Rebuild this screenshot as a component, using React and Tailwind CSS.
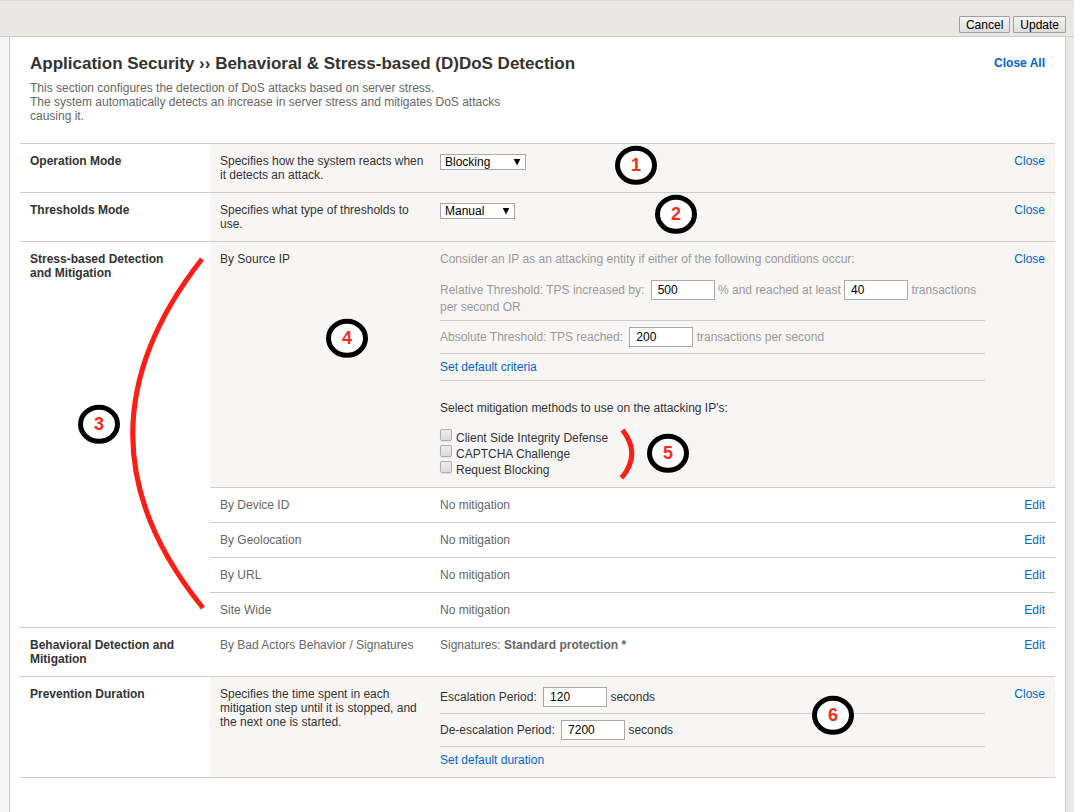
import { useId } from "react";

const linkClass = "text-[#0066cc] hover:underline";
const fieldClass =
  "inline-block h-5 w-16 border border-[#a9a9a9] bg-white px-1.5 align-baseline text-xs leading-[14px] text-black";
const dividedClass = "border-b border-[#cccccc] pb-1.5";

function Badge({ n, className }) {
  return (
    <span
      className={`absolute flex h-10 w-[42px] items-center justify-center text-lg leading-5 font-bold text-[#fb2c1e] ${className}`}
    >
      <svg className="absolute inset-0" width="42" height="40" viewBox="0 0 42 40" aria-hidden="true">
        <ellipse cx="21" cy="20.300" rx="18.500" ry="17" fill="#fff" stroke="#000" strokeWidth="5" />
      </svg>
      <span className="relative">{n}</span>
    </span>
  );
}

function Select({ label, options, className }) {
  return (
    <span className={`relative block h-4 ${className}`}>
      <select
        aria-label={label}
        className="block h-4 w-full appearance-none border border-[#a9a9a9] bg-white pr-4 pl-1 text-xs leading-[14px] text-black"
      >
        {options.map((o) => (
          <option key={o}>{o}</option>
        ))}
      </select>
      <svg
        className="pointer-events-none absolute top-1 right-[5px]"
        width="8"
        height="8"
        viewBox="0 0 8 8"
        aria-hidden="true"
      >
        <path d="M0.7 1h6.6L4 7.6z" fill="#000" />
      </svg>
    </span>
  );
}

function NumberField({ before, value, after }) {
  const id = useId();
  return (
    <>
      <label htmlFor={id}>{before}</label>{" "}
      <input id={id} type="text" defaultValue={value} className={`ml-[3px] ${fieldClass}`} />{" "}
      {after}
    </>
  );
}

function Check({ label }) {
  return (
    <label className="flex h-4 items-start gap-1">
      <input
        type="checkbox"
        className="h-3 w-3 appearance-none rounded-[2px] border border-[#adadad] bg-linear-to-b from-[#ededed] to-[#dcdcdc] shadow-[0_1px_1px_#e0e0e0] checked:bg-[#0066cc]"
      />
      <span className="pt-0.5 leading-[14px]">{label}</span>
    </label>
  );
}

function Row({ title, children }) {
  return (
    <section className="relative flex border-t border-[#cccccc]">
      <h2 className="w-[190px] shrink-0 py-2.5 pr-7 pl-2.5 font-bold">{title}</h2>
      <div className="flex min-w-0 flex-1 flex-col">{children}</div>
    </section>
  );
}

function Setting({ name, open, action, children }) {
  return (
    <div
      className={`flex grow border-t border-[#cccccc] first:border-t-0 ${open ? "bg-[#f7f6f5]" : "text-[#666666]"}`}
    >
      <div className="w-[220px] shrink-0 py-2.5 pl-2.5">{name}</div>
      <div className="min-w-0 flex-1 py-2.5 pl-2.5">{children}</div>
      <div className="w-[70px] shrink-0 p-2.5 text-right">
        <a href="#" className={linkClass}>
          {action}
        </a>
      </div>
    </div>
  );
}

function ToolbarButton({ children }) {
  return (
    <button
      type="button"
      className="h-[17px] rounded-[1px] border border-[#a0a0a0] bg-linear-to-b from-[#f6f6f6] to-[#dddddd] px-1.5 text-xs leading-[14px] text-black"
    >
      {children}
    </button>
  );
}

export default function App() {
  return (
    <div className="flex min-h-screen flex-col bg-[#e9e8e4] font-['Liberation_Sans',Arial,sans-serif] text-xs leading-[14px] text-[#333333]">
      <header className="flex h-[37px] shrink-0 items-end justify-end gap-[3px] border-t border-b border-t-[#dddcd9] border-b-[#cccccc] pr-2 pb-[3px]">
        <ToolbarButton>Cancel</ToolbarButton>
        <ToolbarButton>Update</ToolbarButton>
      </header>

      <div className="flex flex-1 pr-2">
        <div className="w-[9px] shrink-0 bg-[#f7f6f5]" />
        <main className="min-w-0 flex-1 border-x border-[#cccccc] bg-white px-2.5 pt-[17px]">
          <div className="flex items-start justify-between px-2.5">
            <h1 className="text-[17px] leading-5 font-bold">
              Application Security ›› Behavioral &amp; Stress-based (D)DoS Detection
            </h1>
            <a href="#" className={`pt-0.5 font-bold ${linkClass}`}>
              Close All
            </a>
          </div>
          <p className="mt-[7px] mb-5 max-w-[500px] px-2.5 text-[#666666]">
            This section configures the detection of DoS attacks based on server stress.
            <br />
            The system automatically detects an increase in server stress and mitigates DoS attacks causing it.
          </p>

          <div className="border-b border-[#cccccc]">
            <Row title="Operation Mode">
              <Setting name="Specifies how the system reacts when it detects an attack." open action="Close">
                <Select label="Operation Mode" options={["Blocking", "Transparent", "Off"]} className="w-[86px]" />
              </Setting>
              <Badge n={1} className="top-[1px] left-[595px]" />
            </Row>

            <Row title="Thresholds Mode">
              <Setting name="Specifies what type of thresholds to use." open action="Close">
                <Select label="Thresholds Mode" options={["Manual", "Automatic"]} className="w-[75px]" />
              </Setting>
              <Badge n={2} className="top-[1px] left-[635px]" />
            </Row>

            <Row title="Stress-based Detection and Mitigation">
              <Setting name="By Source IP" open action="Close">
                <div className="text-[#999999]">
                  <p className="mb-3.5">
                    Consider an IP as an attacking entity if either of the following conditions occur:
                  </p>
                  <div className={dividedClass}>
                    <NumberField before="Relative Threshold: TPS increased by:" value="500" after="% and reached at least" />{" "}
                    <input
                      type="text"
                      aria-label="Minimum transactions per second"
                      defaultValue="40"
                      className={fieldClass}
                    />{" "}
                    transactions per second OR
                  </div>
                  <div className={`pt-1.5 ${dividedClass}`}>
                    <NumberField
                      before="Absolute Threshold: TPS reached:"
                      value="200"
                      after="transactions per second"
                    />
                  </div>
                  <div className={`pt-1.5 ${dividedClass}`}>
                    <a href="#" className={linkClass}>
                      Set default criteria
                    </a>
                  </div>
                </div>
                <p className="mt-5 mb-3.5">Select mitigation methods to use on the attacking IP's:</p>
                <Check label="Client Side Integrity Defense" />
                <Check label="CAPTCHA Challenge" />
                <Check label="Request Blocking" />
              </Setting>
              {["By Device ID", "By Geolocation", "By URL", "Site Wide"].map((name) => (
                <Setting key={name} name={name} action="Edit">
                  No mitigation
                </Setting>
              ))}

              <svg
                className="pointer-events-none absolute top-2.5 left-[100px]"
                width="90"
                height="370"
                viewBox="0 0 90 370"
                fill="none"
                aria-hidden="true"
              >
                <path d="M82 7Q-57 184 83 356" stroke="#ff1d14" strokeWidth="5" />
              </svg>
              <svg
                className="pointer-events-none absolute top-[185px] left-[595px]"
                width="24"
                height="56"
                viewBox="0 0 24 56"
                fill="none"
                aria-hidden="true"
              >
                <path d="M7.500 3Q26.500 27 6.500 51" stroke="#ff1d14" strokeWidth="5" />
              </svg>
              <Badge n={3} className="top-[162px] left-[58px]" />
              <Badge n={4} className="top-[76px] left-[306px]" />
              <Badge n={5} className="top-[191px] left-[627px]" />
            </Row>

            <Row title="Behavioral Detection and Mitigation">
              <Setting name="By Bad Actors Behavior / Signatures" action="Edit">
                Signatures: <b>Standard protection *</b>
              </Setting>
            </Row>

            <Row title="Prevention Duration">
              <Setting
                name="Specifies the time spent in each mitigation step until it is stopped, and the next one is started."
                open
                action="Close"
              >
                <div className={dividedClass}>
                  <NumberField before="Escalation Period:" value="120" after="seconds" />
                </div>
                <div className={`pt-1.5 ${dividedClass}`}>
                  <NumberField before="De-escalation Period:" value="7200" after="seconds" />
                </div>
                <div className="pt-1.5">
                  <a href="#" className={linkClass}>
                    Set default duration
                  </a>
                </div>
              </Setting>
              <Badge n={6} className="top-[18px] left-[792px]" />
            </Row>
          </div>
        </main>
      </div>
    </div>
  );
}
